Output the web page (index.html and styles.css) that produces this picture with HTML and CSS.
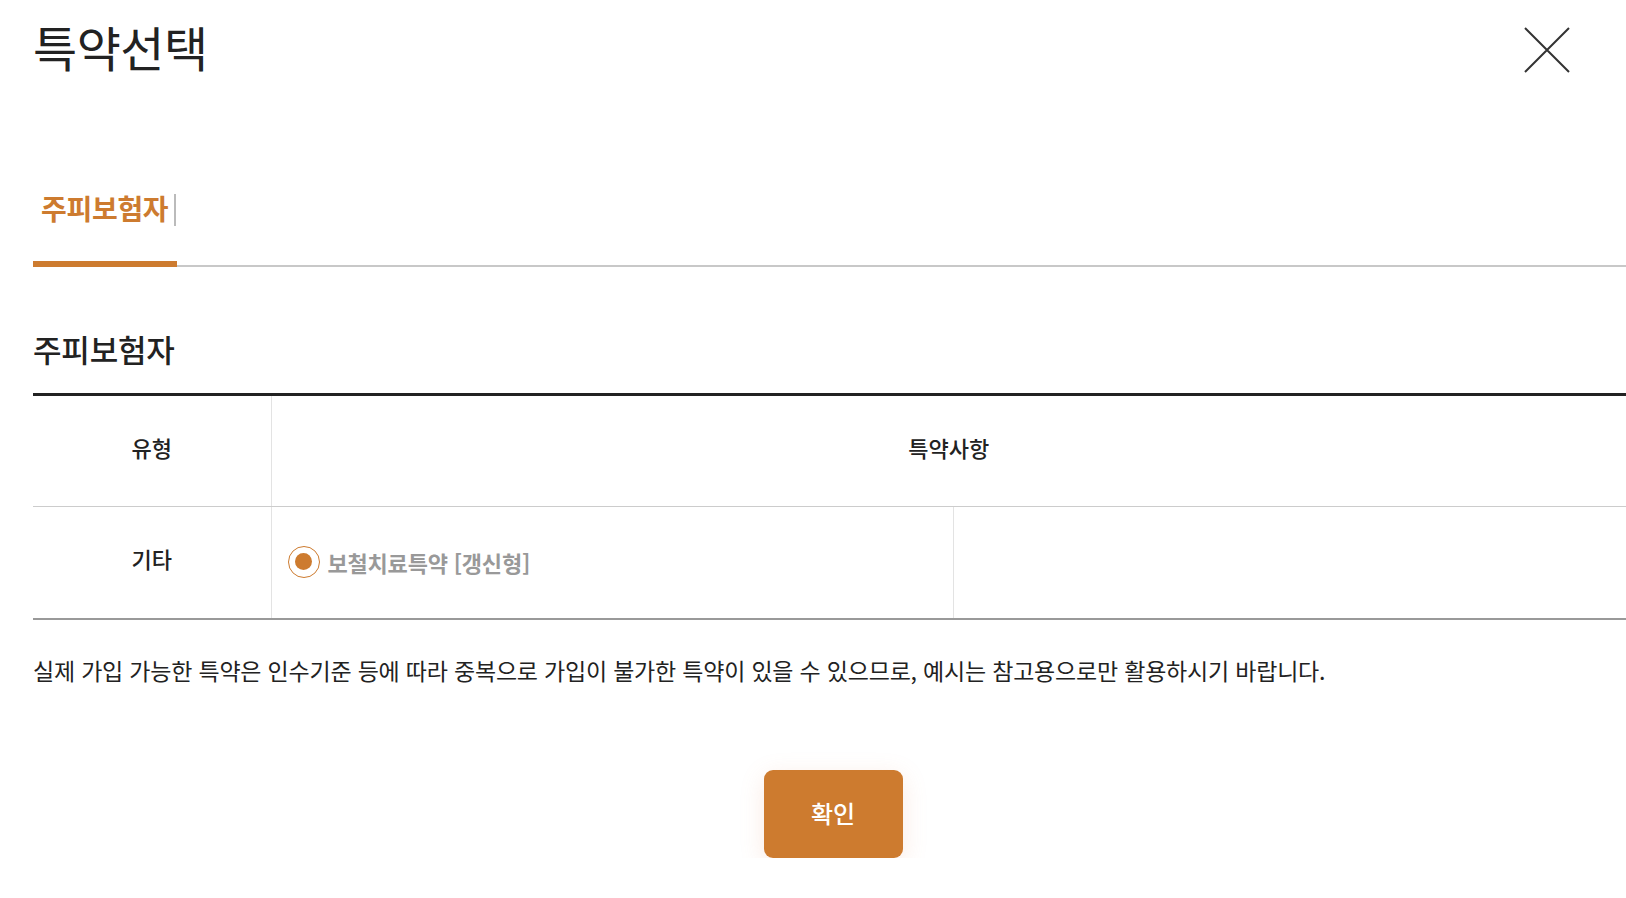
FILE: index.html
```html
<!DOCTYPE html>
<html lang="ko">
<head>
<meta charset="utf-8">
<title>특약선택</title>
<link rel="stylesheet" href="styles.css">
</head>
<body>
<div class="popup">
  <header class="popup-head">
    <h1 class="popup-title">특약선택</h1>
    <button class="close-btn" type="button" aria-label="닫기">
      <svg width="46" height="46" viewBox="0 0 46 46"><path d="M1 1L45 45M45 1L1 45" stroke="#333" stroke-width="2" fill="none"/></svg>
    </button>
  </header>

  <nav class="tabs">
    <div class="tab active"><span class="tab-label">주피보험자</span><span class="tab-sep"></span></div>
  </nav>

  <h2 class="section-title">주피보험자</h2>

  <table class="rider-table">
    <colgroup>
      <col class="col-type">
      <col class="col-a">
      <col class="col-b">
    </colgroup>
    <thead>
      <tr>
        <th>유형</th>
        <th colspan="2">특약사항</th>
      </tr>
    </thead>
    <tbody>
      <tr>
        <th>기타</th>
        <td>
          <label class="radio">
            <span class="radio-mark"></span>
            <span class="radio-text">보철치료특약 [갱신형]</span>
          </label>
        </td>
        <td></td>
      </tr>
    </tbody>
  </table>

  <p class="notice">실제 가입 가능한 특약은 인수기준 등에 따라 중복으로 가입이 불가한 특약이 있을 수 있으므로, 예시는 참고용으로만 활용하시기 바랍니다.</p>

  <div class="actions">
    <button class="confirm-btn" type="button">확인</button>
  </div>
</div>
</body>
</html>
```

FILE: styles.css
```css
html, body {
  margin: 0;
  padding: 0;
  background: #fff;
  overflow: hidden;
}
body {
  font-family: "Noto Sans CJK KR", "Noto Sans", sans-serif;
  color: #222;
}
.popup {
  width: 1600px;
  padding-left: 33px;
  box-sizing: content-box;
}
.popup-head {
  display: flex;
  justify-content: space-between;
  align-items: flex-start;
  height: 150px;
}
.popup-title {
  margin: 0;
  padding-top: 14px;
  font-size: 48px;
  line-height: 64px;
  font-weight: 400;
  letter-spacing: -0.5px;
  color: #222;
}
.close-btn {
  margin: 27px 0 0 0;
  position: relative;
  left: -63px;
  padding: 0;
  border: 0;
  background: none;
  width: 46px;
  height: 46px;
}
.tabs {
  display: flex;
  border-bottom: 2px solid #c8c8c8;
  height: 117px;
  box-sizing: border-box;
}
.tab {
  display: flex;
  align-items: flex-start;
  height: 117px;
  margin-bottom: -2px;
  box-sizing: border-box;
  border-bottom: 6px solid #cd7b2f;
  padding: 38px 0 0 8px;
  width: 144px;
}
.tab-label {
  font-size: 28px;
  line-height: 40px;
  font-weight: 700;
  color: #cd7b2f;
  letter-spacing: -0.3px;
}
.tab-sep {
  margin-left: 6px;
  margin-top: 6px;
  width: 2px;
  height: 32px;
  background: #bbb;
}
.section-title {
  margin: 0;
  padding-top: 61px;
  font-size: 31px;
  line-height: 42px;
  font-weight: 500;
  letter-spacing: -0.2px;
  height: 126px;
  box-sizing: border-box;
}
.rider-table {
  width: 1593px;
  border-collapse: collapse;
  border-top: 3px solid #222;
  border-bottom: 2px solid #999;
  table-layout: fixed;
}
.col-type { width: 238px; }
.col-a { width: 682px; }
.rider-table th,
.rider-table td {
  padding: 0 0 2px 0;
  font-size: 22px;
  font-weight: 500;
  color: #222;
  text-align: center;
  border-left: 1px solid #e3e3e3;
}
.rider-table th { padding-bottom: 9px; }
.rider-table thead th { height: 101px; }
.rider-table tbody th { height: 102px; }
.rider-table tbody td { height: 109px; }
.rider-table th:first-child { border-left: 0; }
.rider-table thead th { border-bottom: 1px solid #ccc; }
.rider-table td { text-align: left; }
.radio {
  display: flex;
  align-items: center;
  padding-left: 16px;
}
.radio-mark {
  width: 30px;
  height: 30px;
  border: 1px solid #cd7b2f;
  border-radius: 50%;
  display: flex;
  align-items: center;
  justify-content: center;
  box-sizing: content-box;
}
.radio-mark::after {
  content: "";
  width: 17px;
  height: 17px;
  border-radius: 50%;
  background: #cd7b2f;
}
.radio-text {
  margin-left: 8px;
  font-size: 22px;
  font-weight: 700;
  color: #999;
  letter-spacing: -0.2px;
}
.notice {
  margin: 0;
  padding-top: 34px;
  font-size: 23px;
  line-height: 32px;
  color: #222;
  letter-spacing: -0.2px;
}
.actions {
  display: flex;
  justify-content: center;
  padding-top: 84px;
}
.confirm-btn {
  width: 139px;
  height: 88px;
  padding: 0 0 4px 0;
  border: 0;
  border-radius: 9px;
  background: #cd7b2f;
  color: #fff;
  font-family: "Noto Sans CJK KR", sans-serif;
  font-size: 24px;
  font-weight: 500;
  box-shadow: 0 6px 24px rgba(230, 140, 100, 0.18);
}
```
